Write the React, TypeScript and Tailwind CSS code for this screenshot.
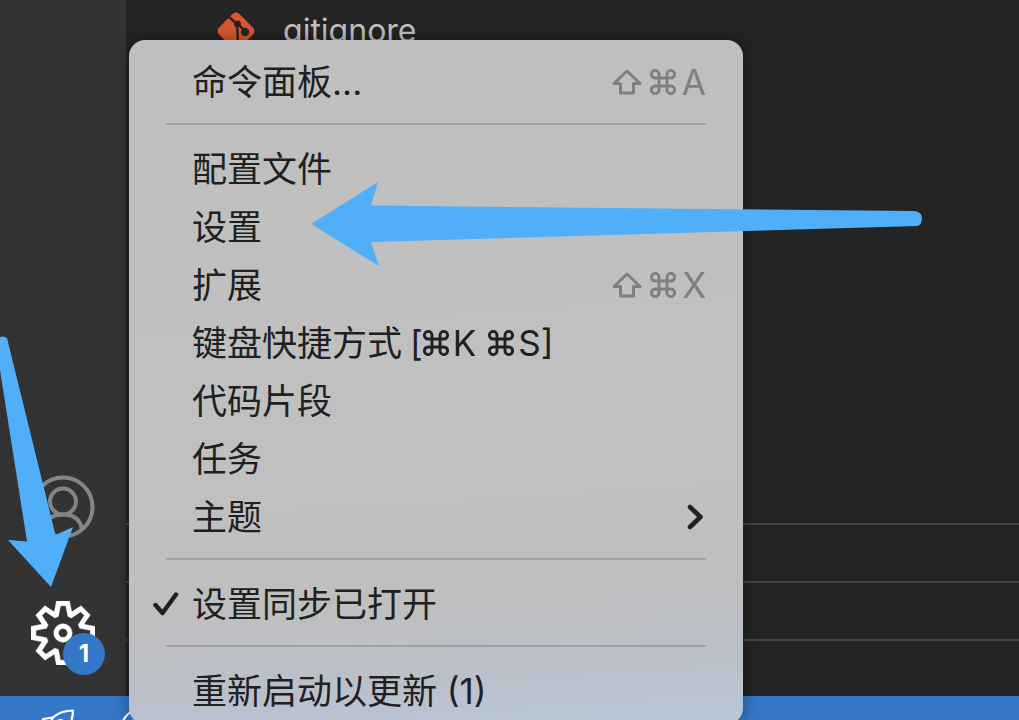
import type { ReactNode } from 'react'

type IconProps = { className?: string }

function GitIcon({ className }: IconProps) {
  return (
    <svg viewBox="0 0 38 38" className={className} aria-hidden="true">
      <rect x="4.500" y="4.500" width="29" height="29" rx="5" transform="rotate(45 19 19)" fill="#d9562f" />
      <path d="M11 4 L20 12 L21 31 M21 12 L28 19" stroke="#242424" strokeWidth="2.4" fill="none" />
      <circle cx="20.500" cy="12" r="3.400" fill="#242424" />
      <circle cx="28" cy="20" r="4.200" fill="#242424" />
    </svg>
  )
}

function AccountIcon({ className }: IconProps) {
  return (
    <svg viewBox="0 0 64 64" className={className} fill="none" stroke="#858585" strokeWidth="4" aria-hidden="true">
      <circle cx="32" cy="32" r="29.500" />
      <circle cx="32" cy="26.500" r="13" />
      <path d="M13 54 C15 44 22 39.500 32 39.500 C42 39.500 49 44 51 54" />
    </svg>
  )
}

function GearIcon({ className }: IconProps) {
  return (
    <svg viewBox="0 0 24 24" className={className} fill="#fff" stroke="#fff" strokeWidth="0.2" fillRule="evenodd" clipRule="evenodd" aria-hidden="true">
      <path d="M19.85 8.75l4.15.83v4.84l-4.15.83 2.35 3.52-3.43 3.43-3.52-2.35-.83 4.15H9.58l-.83-4.15-3.52 2.35-3.43-3.43 2.35-3.52L0 14.42V9.58l4.15-.83L1.8 5.23 5.23 1.8l3.52 2.35L9.58 0h4.84l.83 4.15 3.52-2.35 3.43 3.43-2.35 3.52zm-1.57 5.07l4-.81v-2l-4-.81-.54-1.3 2.29-3.43-1.43-1.43-3.43 2.29-1.3-.54-.81-4h-2l-.81 4-1.3.54-3.43-2.29-1.43 1.43L6.38 8.9l-.54 1.3-4 .81v2l4 .81.54 1.3-2.29 3.43 1.43 1.43 3.43-2.29 1.3.54.81 4h2l.81-4 1.3-.54 3.43 2.29 1.43-1.43-2.29-3.43.54-1.3zm-8.186-4.672A3.43 3.43 0 0 1 12 8.57 3.44 3.44 0 0 1 15.43 12a3.43 3.43 0 1 1-5.336-2.852zm.956 4.274c.281.188.612.288.95.288A1.7 1.7 0 0 0 13.71 12a1.71 1.71 0 1 0-2.66 1.422z" />
    </svg>
  )
}

function RocketIcon({ className }: IconProps) {
  return (
    <svg viewBox="0 0 34 34" className={className} fill="none" stroke="currentColor" strokeWidth="2.2" strokeLinejoin="round" aria-hidden="true">
      <path d="M12 8.500 C17 4 24 1.500 32 1.500 C32 9 29 17 24 22 L19 27 L8 16 Z" />
      <path d="M12 8.500 L2 10 L1 16 L8 16 M24 22 L24 31 L18 33 L19 27" />
      <circle cx="19.500" cy="14" r="3" />
    </svg>
  )
}

function ShiftIcon({ className }: IconProps) {
  return (
    <svg viewBox="0 0 30 26" className={className} fill="none" stroke="currentColor" strokeWidth="3" strokeLinejoin="round" aria-hidden="true">
      <path d="M15 2 L28 14.500 H21.500 V24 H8.500 V14.500 H2 Z" />
    </svg>
  )
}

function CommandIcon({ className }: IconProps) {
  return (
    <svg viewBox="0 0 26 26" className={className} fill="none" stroke="currentColor" strokeWidth="2.9" aria-hidden="true">
      <path d="M9 9 V5.4 A3.8 3.8 0 1 0 5.2 9 H20.8 A3.8 3.8 0 1 0 17 5.4 V20.6 A3.8 3.8 0 1 0 20.8 17 H5.2 A3.8 3.8 0 1 0 9 20.6 Z" />
    </svg>
  )
}

function Shortcut({ letter }: { letter: string }) {
  return (
    <span className="flex items-center text-[#7e7f7f]">
      <ShiftIcon className="h-[26px] w-[30px]" />
      <CommandIcon className="ml-2 h-[26px] w-[26px]" />
      <span className="w-[30px] text-right">{letter}</span>
    </span>
  )
}

function MenuItem({ children, checked, trailing }: { children: ReactNode; checked?: boolean; trailing?: ReactNode }) {
  return (
    <button
      type="button"
      role={checked ? 'menuitemcheckbox' : 'menuitem'}
      aria-checked={checked}
      className="flex h-[58px] w-full items-center pr-[37px] pl-[22px] text-left whitespace-nowrap"
    >
      <span className="flex w-[41px] items-center">
        {checked && (
          <svg viewBox="0 0 28 26" className="h-[26px] w-7" fill="none" stroke="currentColor" strokeWidth="4.4" strokeLinecap="round" strokeLinejoin="round" aria-hidden="true">
            <path d="M4.500 14 L11.500 22 L25 3.500" />
          </svg>
        )}
      </span>
      <span className="flex flex-1 items-center">{children}</span>
      {trailing}
    </button>
  )
}

function Divider() {
  return (
    <div role="separator" className="flex h-[29px] items-center px-[37px] pb-[3px]">
      <div className="h-0.5 w-full bg-black/15" />
    </div>
  )
}

function ContextMenu() {
  return (
    <div
      role="menu"
      className="absolute top-10 left-[129px] w-[614px] rounded-[16px] bg-[linear-gradient(176deg,#bebfbe_0%,#c0c0c0_60%,#bfbfc0_80%,#bac0ca_91%,#b9c7d8_100%)] pt-[13px] pb-1 text-[35px] leading-[58px] text-[#202020] shadow-[0_0_16px_rgba(0,0,0,0.4)]"
    >
      <MenuItem trailing={<Shortcut letter="A" />}>命令面板...</MenuItem>
      <Divider />
      <MenuItem>配置文件</MenuItem>
      <MenuItem>设置</MenuItem>
      <MenuItem trailing={<Shortcut letter="X" />}>扩展</MenuItem>
      <MenuItem>
        键盘快捷方式
        <span className="ml-2">[</span>
        <CommandIcon className="mr-1 h-[26px] w-[26px]" />
        K
        <CommandIcon className="mr-1 ml-3 h-[26px] w-[26px]" />
        S]
      </MenuItem>
      <MenuItem>代码片段</MenuItem>
      <MenuItem>任务</MenuItem>
      <MenuItem
        trailing={
          <svg viewBox="0 0 18 28" className="mr-0.5 h-7 w-[18px]" fill="none" stroke="currentColor" strokeWidth="4.6" strokeLinecap="round" strokeLinejoin="round" aria-hidden="true">
            <path d="M4 4 L14.500 14 L4 24" />
          </svg>
        }
      >
        主题
      </MenuItem>
      <Divider />
      <MenuItem checked>设置同步已打开</MenuItem>
      <Divider />
      <MenuItem>重新启动以更新 (1)</MenuItem>
    </div>
  )
}

// Hand-drawn pointers lying over the window
function Arrows() {
  return (
    <svg viewBox="0 0 1019 720" className="pointer-events-none absolute top-0 left-0 h-[720px] w-[1019px]" fill="#50aff8" aria-hidden="true">
      <path d="M311 224 L378 182 L371 205.500 L914 211 Q922 212 922 218 Q922 225 917 226 L371 242 L379 266 Z" />
      <path d="M-4 340 Q2 334 7 338 L55.500 535 L73 527 L51 587 L8 540 L27 541.500 L0 370 Z" />
    </svg>
  )
}

export default function App() {
  return (
    <div className="relative flex h-screen flex-col overflow-hidden bg-[#242424] font-['Inter','Noto_Sans_CJK_SC',sans-serif]">
      <div className="flex min-h-0 flex-1">
        <nav className="flex w-[126px] shrink-0 flex-col items-center justify-end gap-[62px] bg-[#333333] pb-[31px]">
          <button type="button" aria-label="账户">
            <AccountIcon className="h-16 w-16" />
          </button>
          <button type="button" aria-label="管理" className="relative">
            <GearIcon className="h-16 w-16" />
            <span className="absolute top-8 left-8 flex h-[42px] w-[42px] items-center justify-center rounded-full bg-[#3477c6] text-2xl font-bold text-white">
              1
            </span>
          </button>
        </nav>
        <main className="flex min-w-0 flex-1 flex-col justify-between">
          <div className="flex h-[62px] items-center gap-7 pl-[91px]">
            <GitIcon className="h-[38px] w-[38px]" />
            <span className="text-[32px] text-[#c0c0c0]">gitignore</span>
          </div>
          <div>
            <div className="h-[58px] border-t-2 border-[#444444]" />
            <div className="h-[58px] border-t-2 border-[#444444]" />
            <div className="h-[57px] border-t-2 border-[#444444]" />
          </div>
        </main>
      </div>
      <footer className="flex h-6 shrink-0 items-start gap-[46px] overflow-hidden bg-[#3477c6] pt-[13px] pl-[41px] text-white">
        <RocketIcon className="h-[34px] w-[34px] shrink-0" />
        <svg viewBox="0 0 34 34" className="h-[34px] w-[34px] shrink-0" fill="none" stroke="currentColor" strokeWidth="2.2" aria-hidden="true">
          <circle cx="17" cy="17" r="15.500" />
          <path d="M11 11 L23 23 M23 11 L11 23" />
        </svg>
      </footer>
      <ContextMenu />
      <Arrows />
    </div>
  )
}
